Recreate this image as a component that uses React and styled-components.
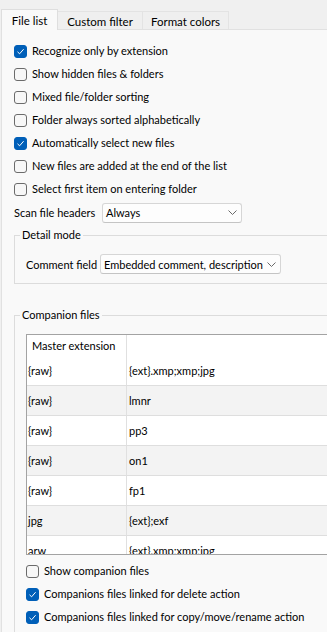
import React from "react";
import styled, { createGlobalStyle } from "styled-components";

const GlobalStyle = createGlobalStyle`
  html, body {
    margin: 0;
    padding: 0;
    background: #f0f0f0;
  }
  body {
    font-family: Lato, "Liberation Sans", sans-serif;
    font-size: 11px;
    color: #000;
  }
`;

const Window = styled.div`
  width: 327px;
  height: 632px;
  overflow: hidden;
  padding-left: 1px;
  box-sizing: border-box;
  display: flex;
  flex-direction: column;
`;

const TabStrip = styled.div`
  display: flex;
  align-items: flex-end;
  height: 29px;
  flex-shrink: 0;
`;

const Tab = styled.div`
  box-sizing: border-box;
  display: flex;
  align-items: center;
  justify-content: center;
  width: ${(p) => p.w}px;
  height: ${(p) => (p.active ? 21 : 18)}px;
  font-size: 11.5px;
  background: ${(p) => (p.active ? "#f9f9f9" : "#efefef")};
  border-top: 1px solid ${(p) => (p.active ? "#dedede" : "#e3e3e3")};
  border-right: 1px solid ${(p) => (p.active ? "#dedede" : "#e3e3e3")};
  border-left: ${(p) => (p.active ? "1px solid #dedede" : "none")};
  margin-bottom: ${(p) => (p.active ? -1 : 0)}px;
  position: relative;
  z-index: ${(p) => (p.active ? 1 : 0)};
  padding-top: ${(p) => (p.active ? 0 : 1)}px;
`;

const Panel = styled.div`
  flex: 1;
  background: #f9f9f9;
  border-top: 1px solid #e1e1e1;
  border-left: 1px solid #e1e1e1;
  padding: 9px 0 0 12px;
  display: flex;
  flex-direction: column;
`;

const CheckRow = styled.label`
  display: flex;
  align-items: center;
  gap: 5px;
  height: 23px;
  flex-shrink: 0;
  white-space: nowrap;
`;

const Box = styled.span`
  box-sizing: border-box;
  width: 13px;
  height: 13px;
  border-radius: 3px;
  flex-shrink: 0;
  display: flex;
  align-items: center;
  justify-content: center;
  margin-top: 1px;
  background: ${(p) => (p.checked ? "#005fb8" : "#f7f7f7")};
  border: 1px solid ${(p) => (p.checked ? "#005fb8" : "#6b6b6b")};
`;

const FieldRow = styled.div`
  display: flex;
  align-items: center;
  height: ${(p) => p.h || 23}px;
  margin-top: ${(p) => p.mt || 0}px;
  flex-shrink: 0;
  white-space: nowrap;
`;

const FieldLabel = styled.span`
  width: ${(p) => p.w}px;
  flex-shrink: 0;
`;

const Combo = styled.div`
  box-sizing: border-box;
  width: ${(p) => p.w}px;
  height: 20px;
  background: #fdfdfd;
  border: 1px solid #d6d6d6;
  border-bottom-color: #c4c4c4;
  border-radius: 3px;
  display: flex;
  align-items: center;
  justify-content: space-between;
  padding: 0 4px 0 3px;
`;

const GroupBox = styled.div`
  border: 1px solid #dcdcdc;
  margin-top: ${(p) => p.mt}px;
  margin-right: -20px;
  padding: 0 0 ${(p) => p.pb || 0}px 11px;
  display: flex;
  flex-direction: column;
  flex-shrink: 0;
`;

const GroupTitle = styled.div`
  align-self: flex-start;
  margin: -9px 0 0 -6px;
  padding: 0 2px;
  line-height: 16px;
  background: #f9f9f9;
`;

const TableFrame = styled.div`
  margin-top: 11px;
  height: 219px;
  overflow: hidden;
  background: #fff;
  border-top: 1px solid #a3a3a3;
  border-left: 1px solid #a3a3a3;
  border-bottom: 1px solid #a3a3a3;
  flex-shrink: 0;
`;

const Row = styled.div`
  display: grid;
  grid-template-columns: 100px 1fr;
  height: ${(p) => (p.header ? 21 : 30)}px;
  box-sizing: border-box;
  background: ${(p) => (p.shaded ? "#f3f3f3" : "#fff")};
  border-bottom: ${(p) => (p.header ? "none" : "1px solid #dedede")};
`;

const Cell = styled.div`
  display: flex;
  align-items: center;
  padding-left: ${(p) => p.pl}px;
  border-right: ${(p) => (p.first ? "1px solid #e0e0e0" : "none")};
  white-space: nowrap;
`;

const Spacer = styled.div`
  height: ${(p) => p.h}px;
  flex-shrink: 0;
`;

const Check = ({ checked }) => (
  <Box checked={checked}>
    {checked && (
      <svg width="9" height="9" viewBox="0 0 9 9">
        <path d="M1.5 4.8 L3.6 6.8 L7.6 2.2" fill="none" stroke="#fff" strokeWidth="1" />
      </svg>
    )}
  </Box>
);

const Chevron = () => (
  <svg width="9" height="5" viewBox="0 0 9 5">
    <path d="M0.5 0.5 L4.5 4.5 L8.5 0.5" fill="none" stroke="#6a6a6a" strokeWidth="1" />
  </svg>
);

const Option = ({ checked, children }) => (
  <CheckRow>
    <Check checked={checked} />
    <span>{children}</span>
  </CheckRow>
);

const options = [
  ["Recognize only by extension", true],
  ["Show hidden files & folders", false],
  ["Mixed file/folder sorting", false],
  ["Folder always sorted alphabetically", false],
  ["Automatically select new files", true],
  ["New files are added at the end of the list", false],
  ["Select first item on entering folder", false],
];

const companions = [
  ["{raw}", "{ext}.xmp;xmp;jpg"],
  ["{raw}", "lmnr"],
  ["{raw}", "pp3"],
  ["{raw}", "on1"],
  ["{raw}", "fp1"],
  ["jpg", "{ext};exf"],
  ["arw", "{ext}.xmp;xmp;jpg"],
];

export default function App() {
  return (
    <Window>
      <GlobalStyle />
      <TabStrip>
        <Tab active w={57}>File list</Tab>
        <Tab w={85}>Custom filter</Tab>
        <Tab w={86}>Format colors</Tab>
      </TabStrip>
      <Panel>
        {options.map(([text, checked]) => (
          <Option key={text} checked={checked}>
            {text}
          </Option>
        ))}
        <FieldRow mt={1}>
          <FieldLabel w={88}>Scan file headers</FieldLabel>
          <Combo w={140}>
            <span>Always</span>
            <Chevron />
          </Combo>
        </FieldRow>

        <GroupBox mt={11} pb={9}>
          <GroupTitle>Detail mode</GroupTitle>
          <FieldRow h={20} mt={11}>
            <FieldLabel w={74}>Comment field</FieldLabel>
            <Combo w={181}>
              <span>Embedded comment, description</span>
              <Chevron />
            </Combo>
          </FieldRow>
        </GroupBox>

        <GroupBox mt={31} pb={20}>
          <GroupTitle>Companion files</GroupTitle>
          <TableFrame>
            <Row header>
              <Cell first pl={5}>Master extension</Cell>
              <Cell pl={2} />
            </Row>
            {companions.map(([master, linked], i) => (
              <Row key={i} shaded={i % 2 === 1}>
                <Cell first pl={1}>{master}</Cell>
                <Cell pl={2}>{linked}</Cell>
              </Row>
            ))}
          </TableFrame>
          <Spacer h={4} />
          <Option checked={false}>Show companion files</Option>
          <Option checked>Companions files linked for delete action</Option>
          <Option checked>Companions files linked for copy/move/rename action</Option>
        </GroupBox>
      </Panel>
    </Window>
  );
}
